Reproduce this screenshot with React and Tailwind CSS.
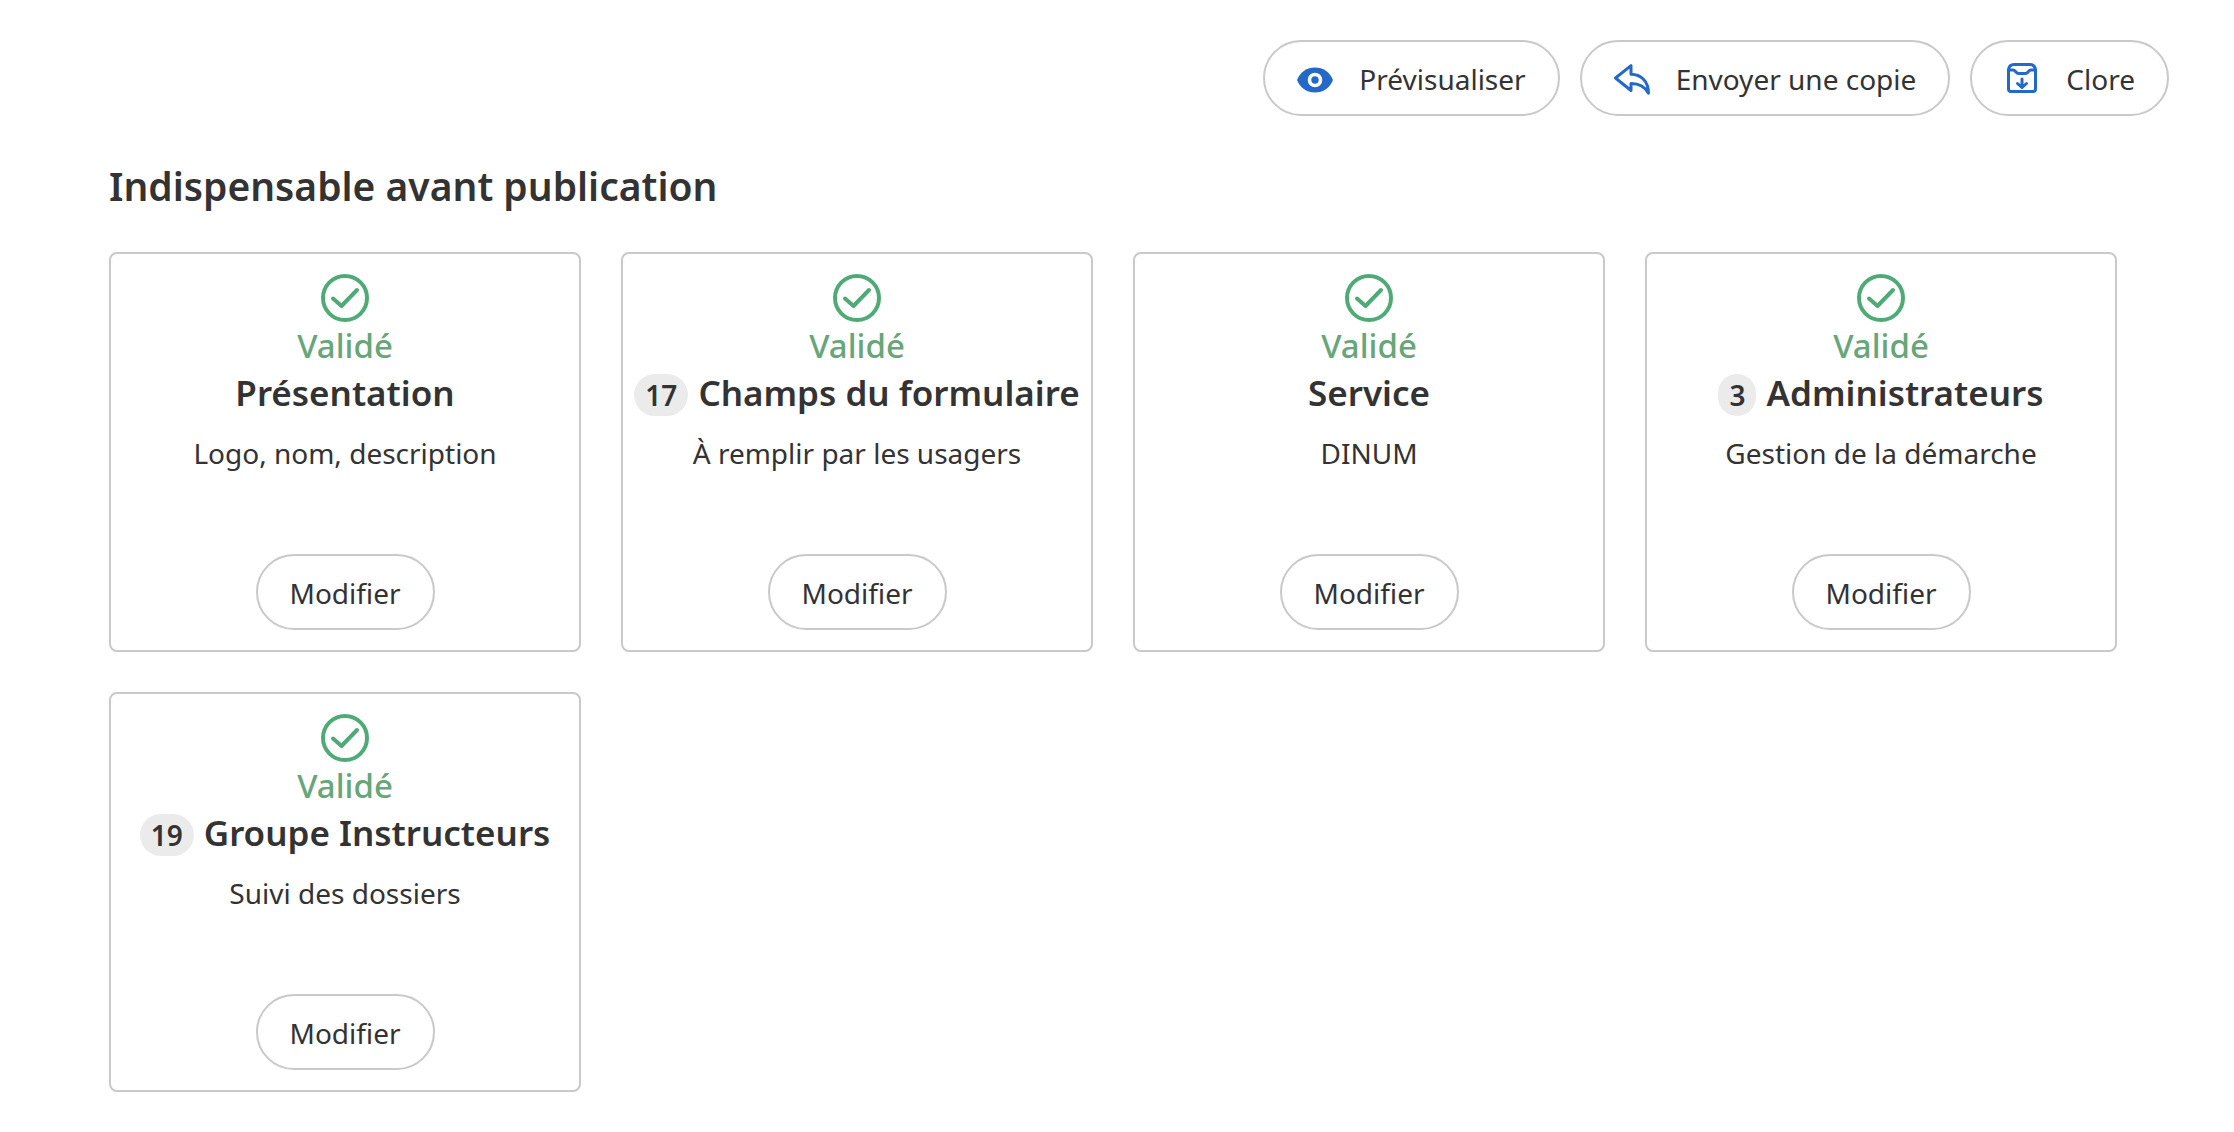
import React from 'react';

const cards = [
  { title: 'Présentation', subtitle: 'Logo, nom, description' },
  { title: 'Champs du formulaire', subtitle: 'À remplir par les usagers', count: 17 },
  { title: 'Service', subtitle: 'DINUM' },
  { title: 'Administrateurs', subtitle: 'Gestion de la démarche', count: 3 },
  { title: 'Groupe Instructeurs', subtitle: 'Suivi des dossiers', count: 19 },
];

function EyeIcon() {
  return (
    <svg viewBox="0 0 36 36" className="size-9" fill="none" aria-hidden="true">
      <path d="M0 19C3 11 10 6.500 18 6.500S33 11 36 19C33 27 26 31.500 18 31.500S3 27 0 19Z" fill="#2468c8" />
      <circle cx="18" cy="19" r="5.500" stroke="#fff" strokeWidth="3.600" />
    </svg>
  );
}

function ReplyIcon() {
  return (
    <svg viewBox="0 0 36 36" className="size-9" fill="none" stroke="#2468c8" strokeWidth="3" strokeLinejoin="round" aria-hidden="true">
      <path d="M1.500 17 17 4.700v8.600c9.500.2 17.300 6 17.500 19C31 25.500 25.500 22.500 17 22.500V29.500Z" />
    </svg>
  );
}

function ArchiveIcon() {
  return (
    <svg viewBox="0 0 36 36" className="size-9" fill="none" stroke="#2468c8" strokeWidth="3" strokeLinecap="round" strokeLinejoin="round" aria-hidden="true">
      <path d="M4.500 8.500C5 5.500 7 3.500 10 3.500h16c3 0 5 2 5.500 5V28a2.500 2.500 0 0 1-2.500 2.500H7A2.500 2.500 0 0 1 4.500 28Z" />
      <path d="M5 9h4c2.500 0 3 3.500 5.500 3.500h7C24 12.500 24.500 9 27 9h4" />
      <path d="M18 18v8.500M13.500 22.500l4.500 4 4.500-4" />
    </svg>
  );
}

function CheckIcon() {
  return (
    <svg viewBox="0 0 48 48" className="size-12 shrink-0" fill="none" stroke="#4fab76" strokeWidth="4" strokeLinecap="round" strokeLinejoin="round" aria-hidden="true">
      <circle cx="24" cy="24" r="22" />
      <path d="m12 24.500 8.500 7.500L36 16" />
    </svg>
  );
}

function PillButton({ icon, children }) {
  return (
    <button type="button" className="flex h-[76px] items-center gap-[26px] rounded-full border-2 border-[#c9c9c9] bg-white px-8 pt-0.5 text-[28px] leading-10 whitespace-nowrap">
      {icon}
      {children}
    </button>
  );
}

function Card({ title, subtitle, count }) {
  return (
    <article className="flex min-h-[400px] flex-col items-center rounded-lg border-2 border-[#c9c9c9] py-5 text-center">
      <CheckIcon />
      <p className="text-[33px] leading-[48px] font-medium text-[#67a679]">Validé</p>
      <div className="flex h-11 items-baseline gap-[10px] whitespace-nowrap">
        {count && <span className="rounded-full bg-[#ebebeb] px-[11px] text-[28px] leading-[42px] font-semibold">{count}</span>}
        <h3 className="text-[35px] leading-[46px] font-semibold">{title}</h3>
      </div>
      <p className="mt-5 text-[28px] leading-[38px]">{subtitle}</p>
      <div className="mt-auto">
        <PillButton>Modifier</PillButton>
      </div>
    </article>
  );
}

export default function App() {
  return (
    <main className="min-h-screen bg-white pt-10 font-['Noto_Sans',sans-serif] text-[#333]">
      <div className="flex flex-wrap justify-end gap-5 pr-[65px]">
        <PillButton icon={<EyeIcon />}>Prévisualiser</PillButton>
        <PillButton icon={<ReplyIcon />}>Envoyer une copie</PillButton>
        <PillButton icon={<ArchiveIcon />}>Clore</PillButton>
      </div>
      <section className="mt-[46px] pr-[117px] pl-[109px]">
        <h2 className="text-[39px] leading-[48px] font-semibold">Indispensable avant publication</h2>
        <div className="mt-[42px] grid grid-cols-4 gap-10">
          {cards.map((card) => (
            <Card key={card.title} {...card} />
          ))}
        </div>
      </section>
    </main>
  );
}
